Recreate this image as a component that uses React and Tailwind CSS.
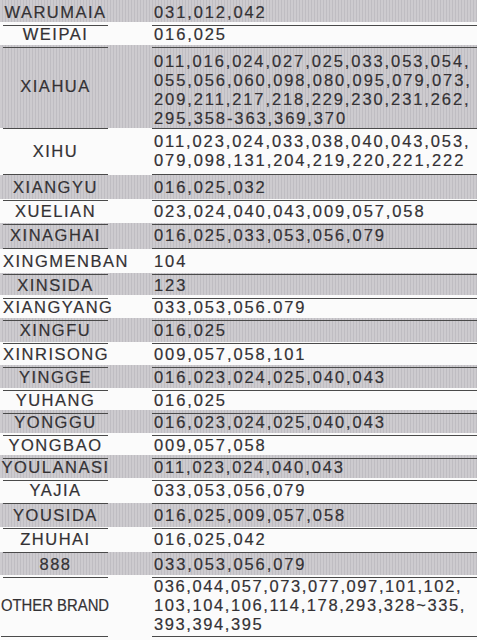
import React from 'react';

const rows = [
  { name: 'WARUMAIA', codes: ['031,012,042'], grey: true, h: 'h-[22px]' },
  { name: 'WEIPAI', codes: ['016,025'], h: 'h-[23px]' },
  {
    name: 'XIAHUA',
    codes: [
      '011,016,024,027,025,033,053,054,',
      '055,056,060,098,080,095,079,073,',
      '209,211,217,218,229,230,231,262,',
      '295,358-363,369,370',
    ],
    grey: true,
    h: 'h-[83px]',
    pad: 'pt-[7px]',
  },
  {
    name: 'XIHU',
    codes: ['011,023,024,033,038,040,043,053,', '079,098,131,204,219,220,221,222'],
    h: 'h-[47px]',
  },
  { name: 'XIANGYU', codes: ['016,025,032'], grey: true, h: 'h-[24px]' },
  { name: 'XUELIAN', codes: ['023,024,040,043,009,057,058'], h: 'h-[24px]' },
  { name: 'XINAGHAI', codes: ['016,025,033,053,056,079'], grey: true, h: 'h-[26px]' },
  { name: 'XINGMENBAN', codes: ['104'], h: 'h-[24px]', left: true },
  { name: 'XINSIDA', codes: ['123'], grey: true, h: 'h-[22px]' },
  { name: 'XIANGYANG', codes: ['033,053,056.079'], h: 'h-[23px]', left: true },
  { name: 'XINGFU', codes: ['016,025'], grey: true, h: 'h-[24px]' },
  { name: 'XINRISONG', codes: ['009,057,058,101'], h: 'h-[23px]', left: true },
  { name: 'YINGGE', codes: ['016,023,024,025,040,043'], grey: true, h: 'h-[23px]' },
  { name: 'YUHANG', codes: ['016,025'], h: 'h-[22px]' },
  { name: 'YONGGU', codes: ['016,023,024,025,040,043'], grey: true, h: 'h-[23px]' },
  { name: 'YONGBAO', codes: ['009,057,058'], h: 'h-[22px]' },
  { name: 'YOULANASI', codes: ['011,023,024,040,043'], grey: true, h: 'h-[23px]' },
  { name: 'YAJIA', codes: ['033,053,056,079'], h: 'h-[25px]' },
  { name: 'YOUSIDA', codes: ['016,025,009,057,058'], grey: true, h: 'h-[24px]' },
  { name: 'ZHUHAI', codes: ['016,025,042'], h: 'h-[25px]' },
  { name: '888', codes: ['033,053,056,079'], grey: true, h: 'h-[23px]' },
  {
    name: 'OTHER BRAND',
    codes: [
      '036,044,057,073,077,097,101,102,',
      '103,104,106,114,178,293,328~335,',
      '393,394,395',
    ],
    h: 'h-[62px]',
    left: true,
    small: true,
  },
];

const grey =
  'bg-[#c7c5c9] bg-[image:repeating-linear-gradient(90deg,#cdcbcf_0px,#cdcbcf_2px,#bfbdc2_2px,#bfbdc2_3px)]';

const Row = ({ row }) => (
  <div className={`grid grid-cols-[3px_105px_44px_1fr] ${row.h} ${row.grey ? grey : ''}`}>
    <div />
    {/* Brand */}
    <div
      className={`flex items-center whitespace-nowrap border-b-[1.5px] border-[#4a4a4a] text-[16.5px] ${
        row.left ? 'justify-start' : 'justify-center'
      } ${row.small ? '-ml-[2px] tracking-normal' : 'tracking-[1.5px]'}`}
    >
      <span className={row.small ? 'inline-block origin-left scale-x-[0.9]' : ''}>{row.name}</span>
    </div>
    <div />
    {/* Codes */}
    <div
      className={`flex flex-col justify-center pl-[2px] border-b-[1.5px] border-[#4a4a4a] text-[16.5px] leading-[19px] whitespace-nowrap ${
        row.small ? 'tracking-[1.6px]' : 'tracking-[1.9px]'
      } ${row.pad || ''}`}
    >
      {row.codes.map((c) => (
        <div key={c}>{c}</div>
      ))}
    </div>
  </div>
);

export default function App() {
  return (
    <div className="w-[477px] h-[640px] overflow-hidden bg-[#fbfbfb] text-[#333134] [-webkit-text-stroke:0.2px_#333134] font-['Liberation_Sans',Arial,sans-serif]">
      {rows.map((r) => (
        <Row key={r.name} row={r} />
      ))}
    </div>
  );
}
